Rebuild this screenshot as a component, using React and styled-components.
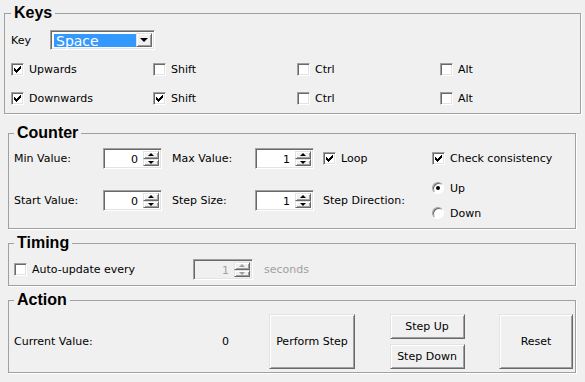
import React from 'react';
import styled, { createGlobalStyle } from 'styled-components';

const GlobalStyle = createGlobalStyle`
  html, body {
    margin: 0;
    padding: 0;
    background: #f0f0f0;
  }
  body {
    font-family: "DejaVu Sans", Tahoma, sans-serif;
    font-size: 11px;
    color: #000;
  }
`;

const Window = styled.div`
  width: 585px;
  height: 382px;
  box-sizing: border-box;
  padding-top: 4px;
  background: #f0f0f0;
  display: flex;
  flex-direction: column;
  overflow: hidden;
`;

const Group = styled.fieldset`
  box-sizing: border-box;
  min-width: 0;
  width: ${p => p.$width}px;
  margin: ${p => p.$top}px 0 0 ${p => p.$left}px;
  padding: ${p => p.$pad};
  border: 1px solid #a0a0a0;
  box-shadow: 1px 1px 0 #fff;
`;

const Title = styled.legend`
  font-family: "Liberation Sans", Arial, sans-serif;
  font-weight: bold;
  font-size: 16px;
  line-height: 18px;
  padding: 0 3px;
`;

const KeysGrid = styled.div`
  display: grid;
  grid-template-columns: 142px 144px 143px 1fr;
  grid-auto-rows: 20px;
  row-gap: 9px;
  align-items: center;
`;

const KeyRow = styled.div`
  grid-column: 1 / -1;
  display: flex;
  align-items: center;
`;

const KeyLabel = styled.span`
  width: 39px;
`;

const Combo = styled.div`
  box-sizing: border-box;
  width: 105px;
  height: 20px;
  display: flex;
  padding: 2px;
  background: #fff;
  border: 1px solid;
  border-color: #a0a0a0 #fff #fff #a0a0a0;
  box-shadow: inset 1px 1px 0 #696969, inset -1px -1px 0 #e3e3e3;
`;

const ComboText = styled.span`
  flex: 1;
  margin: 1px 0 0 1px;
  padding-left: 2px;
  background: #3399ff;
  color: #fff;
  font-size: 14px;
  line-height: 15px;
`;

const Raised = styled.span`
  box-sizing: border-box;
  display: flex;
  align-items: center;
  justify-content: center;
  background: #f0f0f0;
  border: 1px solid;
  border-color: #e3e3e3 #696969 #696969 #e3e3e3;
  box-shadow: inset 1px 1px 0 #fff, inset -1px -1px 0 #a0a0a0;
`;

const ComboButton = styled(Raised)`
  width: 16px;
`;

const Arrow = styled.span`
  width: 0;
  height: 0;
  border-left: ${p => p.$size}px solid transparent;
  border-right: ${p => p.$size}px solid transparent;
  ${p => (p.$up ? 'border-bottom' : 'border-top')}: ${p => p.$size}px solid ${p => (p.$disabled ? '#a0a0a0' : '#000')};
`;

const Option = styled.label`
  display: flex;
  align-items: center;
  gap: ${p => p.$gap || 5}px;
  white-space: nowrap;
`;

const Box = styled.span`
  box-sizing: border-box;
  flex: none;
  width: 13px;
  height: 13px;
  display: flex;
  align-items: center;
  justify-content: center;
  background: #fff;
  border: 1px solid;
  border-color: #a0a0a0 #fff #fff #a0a0a0;
  box-shadow: inset 1px 1px 0 #696969, inset -1px -1px 0 #e3e3e3;
`;

const Round = styled.span`
  box-sizing: border-box;
  flex: none;
  width: 12px;
  height: 12px;
  border-radius: 50%;
  display: flex;
  align-items: center;
  justify-content: center;
  background: #fff;
  border: 1px solid;
  border-color: #a0a0a0 #fff #fff #a0a0a0;
  box-shadow: inset 1px 1px 0 #696969;

  &::after {
    content: '';
    display: ${p => (p.$checked ? 'block' : 'none')};
    width: 4px;
    height: 4px;
    border-radius: 50%;
    background: #000;
  }
`;

const CHECK_COLS = [2, 3, 4, 3, 2, 1, 0];

const CheckMark = () => (
  <svg width="7" height="7" viewBox="0 0 7 7" shapeRendering="crispEdges">
    {CHECK_COLS.map((y, x) => (
      <rect key={x} x={x} y={y} width="1" height="3" fill="#000" />
    ))}
  </svg>
);

const Check = ({ checked, children }) => (
  <Option>
    <Box>{checked && <CheckMark />}</Box>
    {children}
  </Option>
);

const RadioItem = styled(Option)`
  height: 22px;
`;

const Radio = ({ checked, children }) => (
  <RadioItem $gap={6}>
    <Round $checked={checked} />
    {children}
  </RadioItem>
);

const SpinFrame = styled.div`
  box-sizing: border-box;
  width: ${p => p.$w}px;
  height: 21px;
  display: flex;
  padding: 2px;
  background: ${p => (p.$disabled ? '#f0f0f0' : '#fff')};
  border: 1px solid;
  border-color: #a0a0a0 #fff #fff #a0a0a0;
  box-shadow: inset 1px 1px 0 #696969, inset -1px -1px 0 #e3e3e3;
`;

const SpinValue = styled.span`
  flex: 1;
  text-align: right;
  padding-right: 5px;
  line-height: 17px;
  color: ${p => (p.$disabled ? '#a0a0a0' : '#000')};
`;

const SpinButtons = styled.span`
  width: 16px;
  display: flex;
  flex-direction: column;
`;

const SpinButton = styled(Raised)`
  flex: 1;
`;

const Spin = ({ value, width = 59, disabled }) => (
  <SpinFrame $w={width} $disabled={disabled}>
    <SpinValue $disabled={disabled}>{value}</SpinValue>
    <SpinButtons>
      <SpinButton><Arrow $up $size={3} $disabled={disabled} /></SpinButton>
      <SpinButton><Arrow $size={3} $disabled={disabled} /></SpinButton>
    </SpinButtons>
  </SpinFrame>
);

const CounterGrid = styled.div`
  display: grid;
  grid-template-columns: 89px 69px 83px 68px 109px 1fr;
  grid-template-rows: 21px 47px;
  row-gap: 8px;
  align-items: center;
`;

const RadioGroup = styled.div`
  display: flex;
  flex-direction: column;
  gap: 3px;
`;

const TimingRow = styled.div`
  display: grid;
  grid-template-columns: 168px 60px auto;
  column-gap: 11px;
  height: 21px;
  align-items: center;
`;

const Muted = styled.span`
  color: #a0a0a0;
`;

const ActionGrid = styled.div`
  display: grid;
  grid-template-columns: 208px 47px 86px 1fr 75px 1fr 74px;
  align-items: center;
  height: 55px;
`;

const StepStack = styled.div`
  grid-column: 5;
  display: flex;
  flex-direction: column;
  gap: 5px;
`;

const PushButton = styled.button`
  box-sizing: border-box;
  width: 100%;
  height: ${p => p.$h}px;
  grid-column: ${p => p.$col || 'auto'};
  padding: 0;
  font: inherit;
  color: #000;
  background: #f0f0f0;
  border: 1px solid;
  border-color: #e3e3e3 #696969 #696969 #e3e3e3;
  box-shadow: inset 1px 1px 0 #fff, inset -1px -1px 0 #a0a0a0;
`;

export default function App() {
  return (
    <>
      <GlobalStyle />
      <Window>
        <Group $width={577} $top={0} $left={4} $pad="8px 6px 5px 6px">
          <Title>Keys</Title>
          <KeysGrid>
            <KeyRow>
              <KeyLabel>Key</KeyLabel>
              <Combo>
                <ComboText>Space</ComboText>
                <ComboButton><Arrow $size={4} /></ComboButton>
              </Combo>
            </KeyRow>
            <Check checked>Upwards</Check>
            <Check>Shift</Check>
            <Check>Ctrl</Check>
            <Check>Alt</Check>
            <Check checked>Downwards</Check>
            <Check checked>Shift</Check>
            <Check>Ctrl</Check>
            <Check>Alt</Check>
          </KeysGrid>
        </Group>

        <Group $width={568} $top={10} $left={8} $pad="6px 5px 4px 5px">
          <Title>Counter</Title>
          <CounterGrid>
            <span>Min Value:</span>
            <Spin value={0} />
            <span>Max Value:</span>
            <Spin value={1} />
            <Check checked>Loop</Check>
            <Check checked>Check consistency</Check>
            <span>Start Value:</span>
            <Spin value={0} />
            <span>Step Size:</span>
            <Spin value={1} />
            <span>Step Direction:</span>
            <RadioGroup>
              <Radio checked>Up</Radio>
              <Radio>Down</Radio>
            </RadioGroup>
          </CounterGrid>
        </Group>

        <Group $width={568} $top={5} $left={8} $pad="7px 5px 5px 5px">
          <Title>Timing</Title>
          <TimingRow>
            <Check>Auto-update every</Check>
            <Spin value={1} width={60} disabled />
            <Muted>seconds</Muted>
          </TimingRow>
        </Group>

        <Group $width={568} $top={5} $left={8} $pad="5px 2px 3px 5px">
          <Title>Action</Title>
          <ActionGrid>
            <span>Current Value:</span>
            <span>0</span>
            <PushButton $h={55}>Perform Step</PushButton>
            <StepStack>
              <PushButton $h={25}>Step Up</PushButton>
              <PushButton $h={25}>Step Down</PushButton>
            </StepStack>
            <PushButton $h={55} $col={7}>Reset</PushButton>
          </ActionGrid>
        </Group>
      </Window>
    </>
  );
}
